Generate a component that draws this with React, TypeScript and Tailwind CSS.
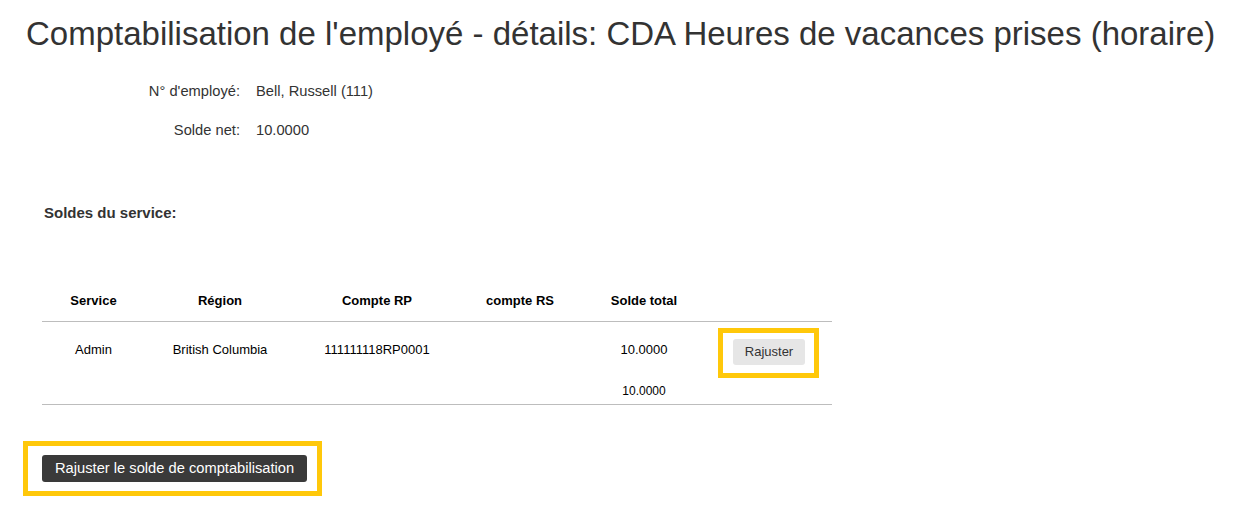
const rows = [
  {
    service: "Admin",
    region: "British Columbia",
    rp: "111111118RP0001",
    rs: "",
    total: "10.0000",
  },
];

export default function App() {
  return (
    <div className="min-h-[518px] bg-white text-[#333] font-['Liberation_Sans',Arial,sans-serif]">
      <h1 className="pl-[26px] pt-[14px] text-[33px] leading-[40px] text-[#333]">
        Comptabilisation de l'employé - détails: CDA Heures de vacances prises (horaire)
      </h1>

      {/* Employee info */}
      <div className="mt-[28px] grid grid-cols-[240px_1fr] gap-x-[16px] gap-y-[21px] text-[14.7px] leading-[18px]">
        <div className="text-right">N° d'employé:</div>
        <div>Bell, Russell (111)</div>
        <div className="text-right">Solde net:</div>
        <div>10.0000</div>
      </div>

      <h2 className="mt-[65px] pl-[44px] text-[15px] font-bold leading-[18px]">
        Soldes du service:
      </h2>

      <div className="mt-[59px] pl-[42px]">
        <table className="w-[790px] table-fixed border-collapse text-[13px] text-black">
          <colgroup>
            <col className="w-[103px]" />
            <col className="w-[150px]" />
            <col className="w-[164px]" />
            <col className="w-[122px]" />
            <col className="w-[126px]" />
            <col className="w-[125px]" />
          </colgroup>
          <thead>
            <tr className="h-[40px] border-b border-[#bdbdbd] font-bold">
              <th className="text-center">Service</th>
              <th className="text-center">Région</th>
              <th className="text-center">Compte RP</th>
              <th className="text-center">compte RS</th>
              <th className="text-center">Solde total</th>
              <th />
            </tr>
          </thead>
          <tbody>
            {rows.map((r) => (
              <tr key={r.rp} className="h-[56px]">
                <td className="text-center">{r.service}</td>
                <td className="text-center">{r.region}</td>
                <td className="text-center">{r.rp}</td>
                <td className="text-center">{r.rs}</td>
                <td className="text-center">{r.total}</td>
                <td className="text-center pt-[6px] pr-[2px]">
                  <div className="inline-block border-[5px] border-[#ffc80a] pl-[10px] pr-[9px] pt-[6px] pb-[8px] align-middle">
                    <button className="h-[26px] rounded-[3px] bg-[#e6e6e6] px-[12px] text-[13px] text-[#333]">
                      Rajuster
                    </button>
                  </div>
                </td>
              </tr>
            ))}
            <tr className="h-[27px] border-b border-[#bdbdbd]">
              <td colSpan={4} />
              <td className="text-center text-[12px] align-top pt-[4px]">10.0000</td>
              <td />
            </tr>
          </tbody>
        </table>
      </div>

      <div className="mt-[36px] ml-[23px] inline-block border-[5px] border-[#ffc80a] pl-[14px] pr-[10px] py-[9px]">
        <button className="h-[27px] rounded-[3px] bg-[#3a3a3a] px-[13px] text-[14.7px] text-white">
          Rajuster le solde de comptabilisation
        </button>
      </div>
    </div>
  );
}
